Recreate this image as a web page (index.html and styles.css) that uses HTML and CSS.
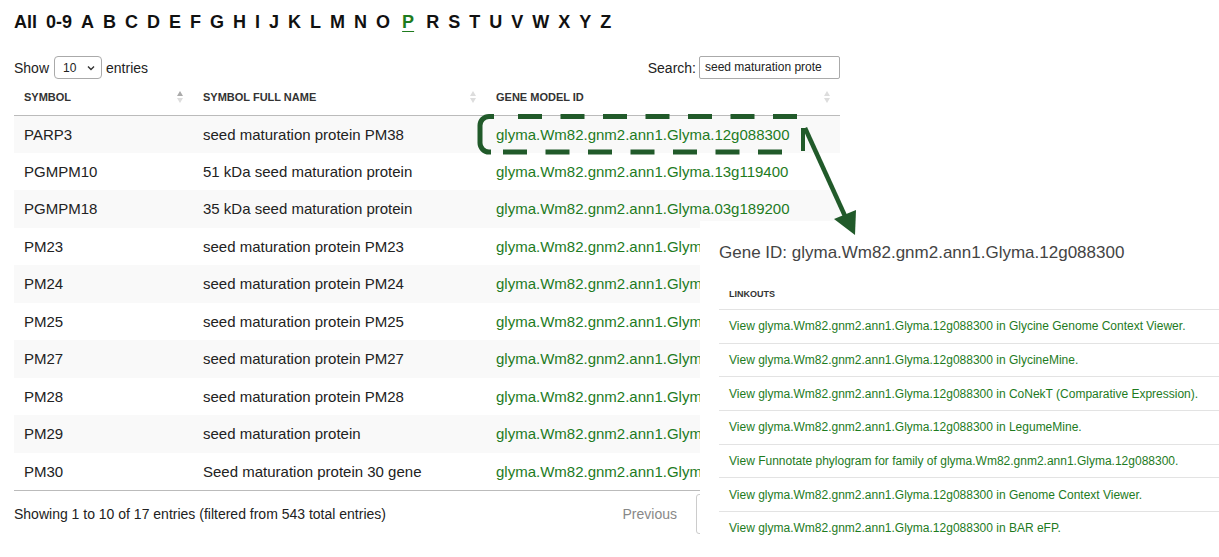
FILE: index.html
```html
<!DOCTYPE html>
<html>
<head>
<meta charset="utf-8">
<link rel="stylesheet" href="styles.css">
</head>
<body>
<div class="page">
  <nav class="alpha">
    <span>All</span><span>0-9</span><span>A</span><span>B</span><span>C</span><span>D</span><span>E</span><span>F</span><span>G</span><span>H</span><span>I</span><span>J</span><span>K</span><span>L</span><span>M</span><span>N</span><span>O</span><span class="cur">P</span><span>R</span><span>S</span><span>T</span><span>U</span><span>V</span><span>W</span><span>X</span><span>Y</span><span>Z</span>
  </nav>
  <div class="controls">
    <div class="len">Show <span class="select">10<svg width="8" height="6" viewBox="0 0 8 6"><path d="M1 1.5 L4 4.5 L7 1.5" fill="none" stroke="#333" stroke-width="1.4"/></svg></span> entries</div>
    <div class="search">Search: <span class="input">seed maturation prote</span></div>
  </div>
  <table class="tbl">
    <thead>
      <tr>
        <th class="c1">SYMBOL<span class="sort up"></span></th>
        <th class="c2">SYMBOL FULL NAME<span class="sort"></span></th>
        <th class="c3">GENE MODEL ID<span class="sort"></span></th>
      </tr>
    </thead>
    <tbody>
      <tr><td>PARP3</td><td>seed maturation protein PM38</td><td><a>glyma.Wm82.gnm2.ann1.Glyma.12g088300</a></td></tr>
      <tr><td>PGMPM10</td><td>51 kDa seed maturation protein</td><td><a>glyma.Wm82.gnm2.ann1.Glyma.13g119400</a></td></tr>
      <tr><td>PGMPM18</td><td>35 kDa seed maturation protein</td><td><a>glyma.Wm82.gnm2.ann1.Glyma.03g189200</a></td></tr>
      <tr><td>PM23</td><td>seed maturation protein PM23</td><td><a>glyma.Wm82.gnm2.ann1.Glyma.12g000000</a></td></tr>
      <tr><td>PM24</td><td>seed maturation protein PM24</td><td><a>glyma.Wm82.gnm2.ann1.Glyma.12g000000</a></td></tr>
      <tr><td>PM25</td><td>seed maturation protein PM25</td><td><a>glyma.Wm82.gnm2.ann1.Glyma.12g000000</a></td></tr>
      <tr><td>PM27</td><td>seed maturation protein PM27</td><td><a>glyma.Wm82.gnm2.ann1.Glyma.12g000000</a></td></tr>
      <tr><td>PM28</td><td>seed maturation protein PM28</td><td><a>glyma.Wm82.gnm2.ann1.Glyma.12g000000</a></td></tr>
      <tr><td>PM29</td><td>seed maturation protein</td><td><a>glyma.Wm82.gnm2.ann1.Glyma.12g000000</a></td></tr>
      <tr><td>PM30</td><td>Seed maturation protein 30 gene</td><td><a>glyma.Wm82.gnm2.ann1.Glyma.12g000000</a></td></tr>
    </tbody>
  </table>
  <div class="footer">
    <div class="info">Showing 1 to 10 of 17 entries (filtered from 543 total entries)</div>
    <div class="pager"><span class="prev">Previous</span><span class="btn cur">1</span><span class="btn">2</span><span class="btn next">Next</span></div>
  </div>
</div>

<div class="panel">
  <h2 class="gid">Gene ID: glyma.Wm82.gnm2.ann1.Glyma.12g088300</h2>
  <div class="links">
    <div class="lhead">LINKOUTS</div>
    <div class="lrow"><a>View glyma.Wm82.gnm2.ann1.Glyma.12g088300 in Glycine Genome Context Viewer.</a></div>
    <div class="lrow"><a>View glyma.Wm82.gnm2.ann1.Glyma.12g088300 in GlycineMine.</a></div>
    <div class="lrow"><a>View glyma.Wm82.gnm2.ann1.Glyma.12g088300 in CoNekT (Comparative Expression).</a></div>
    <div class="lrow"><a>View glyma.Wm82.gnm2.ann1.Glyma.12g088300 in LegumeMine.</a></div>
    <div class="lrow"><a>View Funnotate phylogram for family of glyma.Wm82.gnm2.ann1.Glyma.12g088300.</a></div>
    <div class="lrow"><a>View glyma.Wm82.gnm2.ann1.Glyma.12g088300 in Genome Context Viewer.</a></div>
    <div class="lrow"><a>View glyma.Wm82.gnm2.ann1.Glyma.12g088300 in BAR eFP.</a></div>
  </div>
</div>

<svg class="annot" width="1219" height="557" viewBox="0 0 1219 557">
  <path d="M494 116.5 H489 A9 9 0 0 0 480 125.5 V143 A9 9 0 0 0 489 152 H491" fill="none" stroke="#215a2a" stroke-width="5"/>
  <line x1="518" y1="116.5" x2="798" y2="116.5" stroke="#215a2a" stroke-width="5" stroke-dasharray="24 18.5"/>
  <line x1="503" y1="152" x2="783" y2="152" stroke="#215a2a" stroke-width="5" stroke-dasharray="24 18.5"/>
  <line x1="803" y1="128" x2="803" y2="151" stroke="#215a2a" stroke-width="4"/>
  <line x1="805" y1="128" x2="845" y2="216" stroke="#215a2a" stroke-width="4.5"/>
  <polygon points="834,219 856,210 855,235" fill="#215a2a"/>
</svg>
</body>
</html>
```

FILE: styles.css
```css
html, body {
  margin: 0;
  padding: 0;
  background: #fff;
  width: 1219px;
  height: 557px;
  overflow: hidden;
  font-family: "Liberation Sans", Arial, Helvetica, sans-serif;
  color: #222;
}
.page {
  padding: 0 14px;
  width: 826px;
}
.alpha {
  display: flex;
  gap: 9px;
  height: 44px;
  align-items: center;
  font-weight: bold;
  font-size: 18px;
  color: #111;
}
.alpha .cur {
  color: #1e7b1e;
  text-decoration: underline;
  text-underline-offset: 3px;
  margin: 0 3px;
}
.controls {
  margin-top: 12px;
  height: 23px;
  display: flex;
  justify-content: space-between;
  align-items: center;
  font-size: 14px;
}
.len {
  display: flex;
  align-items: center;
  gap: 4px;
}
.select {
  display: inline-flex;
  align-items: center;
  justify-content: space-between;
  box-sizing: border-box;
  width: 48px;
  height: 23px;
  border: 1px solid #aaa;
  border-radius: 4px;
  padding: 0 6px 0 8px;
  font-size: 12px;
  margin-left: 1px;
}
.search {
  display: flex;
  align-items: center;
  gap: 3px;
}
.input {
  display: inline-block;
  box-sizing: border-box;
  width: 141px;
  height: 23px;
  border: 1px solid #aaa;
  border-radius: 2px;
  padding: 0 5px;
  font-size: 12px;
  line-height: 21px;
  white-space: nowrap;
  overflow: hidden;
}
.tbl {
  margin-top: 1px;
  width: 826px;
  border-collapse: collapse;
  table-layout: fixed;
}
.tbl th {
  position: relative;
  height: 35px;
  box-sizing: border-box;
  padding: 0 10px;
  text-align: left;
  font-size: 11px;
  font-weight: bold;
  color: #333;
  border-bottom: 1px solid #bbb;
}
.tbl th.c1 { width: 179px; }
.tbl th.c2 { width: 293px; }
.sort {
  position: absolute;
  right: 10px;
  top: 10px;
  width: 6px;
  height: 14px;
}
.sort::before, .sort::after {
  content: "";
  position: absolute;
  left: 0;
  border-left: 3px solid transparent;
  border-right: 3px solid transparent;
}
.sort::before {
  top: 1px;
  border-bottom: 5px solid #ddd;
}
.sort::after {
  top: 8px;
  border-top: 5px solid #ddd;
}
.sort.up::before { border-bottom-color: #aaa; }
.tbl td {
  height: 37.5px;
  box-sizing: border-box;
  padding: 0 10px;
  font-size: 15px;
  white-space: nowrap;
  overflow: hidden;
}
.tbl tbody tr:nth-child(odd) td { background: #f9f9f9; }
.tbl tbody tr:last-child td { border-bottom: 1px solid #bbb; }
.tbl a, .lrow a {
  color: #1e7b1e;
  text-decoration: none;
}
.footer {
  height: 46px;
  display: flex;
  align-items: center;
  justify-content: space-between;
  font-size: 14px;
}
.pager {
  display: flex;
  align-items: center;
}
.prev {
  color: #888;
  margin-right: 19px;
}
.btn {
  display: inline-flex;
  align-items: center;
  justify-content: center;
  box-sizing: border-box;
  min-width: 36px;
  height: 40px;
  padding: 0 10px;
  border: 1px solid transparent;
  border-radius: 3px;
  color: #333;
}
.btn.cur { border-color: #ccc; }
.btn.next { width: 72px; }
.panel {
  position: absolute;
  left: 700px;
  top: 221px;
  right: 0;
  bottom: 0;
  background: #fff;
  padding: 22px 0 0 19px;
  box-sizing: border-box;
}
.gid {
  margin: 0;
  font-size: 17px;
  line-height: 20px;
  font-weight: normal;
  color: #444;
  white-space: nowrap;
}
.links {
  margin-top: 16px;
}
.lhead {
  height: 30px;
  box-sizing: border-box;
  padding-left: 10px;
  display: flex;
  align-items: center;
  font-size: 9px;
  font-weight: bold;
  color: #333;
}
.lrow {
  height: 33.7px;
  box-sizing: border-box;
  border-top: 1px solid #e3e3e3;
  padding-left: 10px;
  display: flex;
  align-items: center;
  font-size: 12px;
  white-space: nowrap;
}
.annot {
  position: absolute;
  left: 0;
  top: 0;
  pointer-events: none;
}
```
